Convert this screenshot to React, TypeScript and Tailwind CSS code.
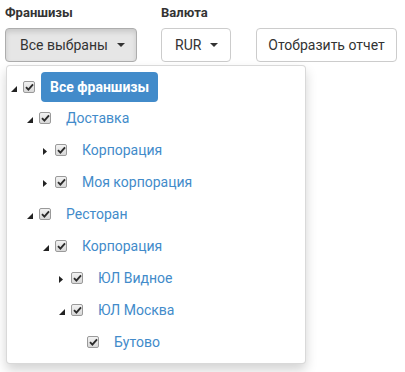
import React from "react";

type Node = {
  label: string;
  level: number;
  toggle?: "open" | "closed";
  selected?: boolean;
};

const nodes: Node[] = [
  { label: "Все франшизы", level: 0, toggle: "open", selected: true },
  { label: "Доставка", level: 1, toggle: "open" },
  { label: "Корпорация", level: 2, toggle: "closed" },
  { label: "Моя корпорация", level: 2, toggle: "closed" },
  { label: "Ресторан", level: 1, toggle: "open" },
  { label: "Корпорация", level: 2, toggle: "open" },
  { label: "ЮЛ Видное", level: 3, toggle: "closed" },
  { label: "ЮЛ Москва", level: 3, toggle: "open" },
  { label: "Бутово", level: 4 },
];

const indent = ["pl-[4px]", "pl-[20px]", "pl-[36px]", "pl-[52px]", "pl-[68px]"];

function Caret() {
  return (
    <span className="ml-[9px] inline-block h-0 w-0 border-x-[4px] border-t-[4px] border-x-transparent border-t-[#333]" />
  );
}

function Toggle({ kind }: { kind?: "open" | "closed" }) {
  if (kind === "open") {
    return (
      <svg width="6" height="6" viewBox="0 0 6 6" className="mt-[4px]">
        <path d="M6 0 L6 6 L0 6 Z" fill="#222" />
      </svg>
    );
  }
  if (kind === "closed") {
    return (
      <svg width="4" height="7" viewBox="0 0 4 7" className="mt-[2px]">
        <path d="M0 0 L4 3.5 L0 7 Z" fill="#222" />
      </svg>
    );
  }
  return null;
}

function CheckBox() {
  return (
    <span className="flex h-[12px] w-[12px] items-center justify-center rounded-[2px] border border-[#9a9a9a] bg-gradient-to-b from-[#f2f2f2] to-[#d8d8d8]">
      <svg width="9" height="8" viewBox="0 0 9 8">
        <path d="M1 4.2 L3.4 6.6 L8 1.4" stroke="#2b2b2b" strokeWidth="1.9" fill="none" />
      </svg>
    </span>
  );
}

function TreeRow({ node }: { node: Node }) {
  return (
    <div className={`flex items-center ${indent[node.level]} ${node.level === 0 ? "h-[30px]" : "h-[32px]"}`}>
      <span className="flex w-[12px] items-center">
        <Toggle kind={node.toggle} />
      </span>
      <CheckBox />
      <span
        className={`ml-[6px] rounded-[4px] px-[9px] py-[6px] text-[14px] leading-[18px] ${
          node.selected ? "bg-[#428bca] font-bold text-white" : "text-[#428bca]"
        }`}
      >
        {node.label}
      </span>
    </div>
  );
}

export default function App() {
  return (
    <div className="min-h-[372px] bg-white pl-[5px] pt-[3px] font-['Roboto','Liberation_Sans',sans-serif] text-[#333]">
      <div className="flex items-end">
        <div className="relative flex flex-col">
          <span className="h-[19px] text-[13px] font-bold leading-[19px]">Франшизы</span>
          <button className="mt-[6px] flex h-[34px] w-[132px] items-center rounded-[4px] border border-[#adadad] bg-[#e6e6e6] pl-[14px] text-[14px] shadow-[inset_0_3px_5px_rgba(0,0,0,0.125)]">
            Все выбраны
            <Caret />
          </button>
          <div className="absolute left-[1px] top-[62px] z-10 w-[300px] rounded-[4px] border border-[rgba(0,0,0,0.15)] bg-white pb-[5px] pt-[6px] shadow-[0_6px_12px_rgba(0,0,0,0.175)]">
            {nodes.map((n, i) => (
              <TreeRow key={i} node={n} />
            ))}
          </div>
        </div>

        <div className="ml-[24px] flex flex-col">
          <span className="h-[19px] text-[13px] font-bold leading-[19px]">Валюта</span>
          <button className="mt-[6px] flex h-[34px] w-[70px] items-center rounded-[4px] border border-[#ccc] bg-white pl-[13px] text-[14px]">
            RUR
            <Caret />
          </button>
        </div>

        <button className="ml-[25px] flex h-[34px] w-[141px] items-center justify-center rounded-[4px] border border-[#ccc] bg-white text-[14px]">
          Отобразить отчет
        </button>
      </div>
    </div>
  );
}
